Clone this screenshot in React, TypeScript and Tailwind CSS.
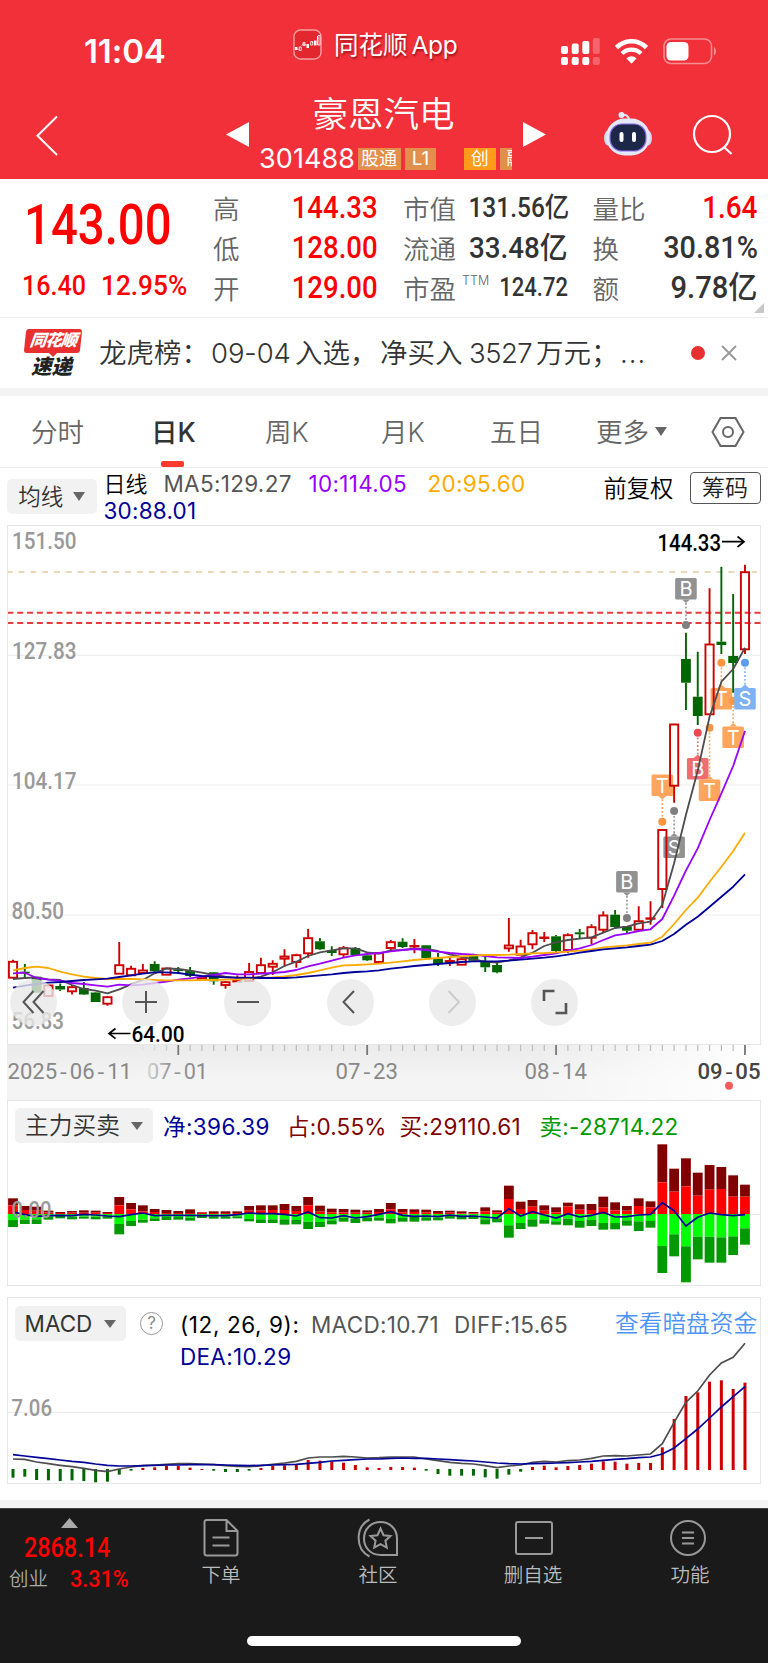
import type { ReactNode } from "react";

const RED = "#cc0000";
const GREEN = "#006600";

// x centre of the n-th trading day
const dayX = (i: number) => 13 + i * 11.806;

const toPoints = (values: number[], y: (v: number) => number = (v) => v) =>
  values.map((v, i) => `${dayX(i).toFixed(1)},${y(v).toFixed(1)}`).join(" ");

// [high, body top, body bottom, low, rising]
const candles: [number, number, number, number, 0 | 1][] = [
  [959.7, 961.3, 977.7, 978.3, 1], [964, 971.7, 973.3, 977.3, 0], [976.7, 976.7, 992.7, 992.7, 0],
  [984.7, 985, 996, 996, 1], [983.5, 986, 989.5, 991, 0], [985, 986.7, 991.3, 994.5, 1],
  [982, 988, 994.5, 995, 0], [992, 992.5, 1002, 1002, 0], [996, 996.7, 1003.7, 1005.7, 1],
  [942, 964.7, 973.7, 974, 1], [965.7, 968.3, 975.3, 976, 1], [964, 970, 973, 974, 1],
  [961.3, 964, 971.3, 972, 0], [967.7, 968, 974.7, 975, 1], [967, 969.5, 971, 973.5, 0],
  [967, 970.7, 976, 977, 0], [977, 977.5, 979, 979, 1], [972, 972.3, 981.3, 984.7, 0],
  [981, 981.7, 985, 988.7, 1], [975.5, 979.5, 981.5, 982, 1], [963, 971.5, 981, 981.5, 1],
  [957.7, 964.7, 973, 974, 1], [960.3, 963.3, 966.7, 975, 1], [949.3, 956, 958.7, 966.7, 1],
  [953.7, 954.7, 962, 967.7, 1], [929, 937.7, 953.3, 957.7, 1], [938, 941.3, 949.3, 950, 0],
  [946.3, 950, 953, 956, 0], [946, 947.7, 954.3, 957, 1], [947, 948, 955, 956, 0],
  [954, 955.3, 960.3, 961, 0], [952, 952.7, 962, 962, 1], [940, 941.7, 948, 950, 1],
  [938.3, 941.7, 947, 948, 0], [939, 945.5, 946.5, 953.3, 1], [945, 945.3, 958, 958.5, 0],
  [953, 958.3, 964, 966, 0], [957, 960.5, 962, 966, 1], [957.5, 958.7, 964.7, 965, 1],
  [953.7, 954.3, 960.7, 961, 0], [956.7, 961.7, 967.3, 972, 0], [962.7, 965, 972.3, 973.3, 0],
  [918, 945, 948.3, 951.7, 1], [939.7, 946, 954.7, 955, 1], [930, 932.7, 944.3, 949.3, 1],
  [932, 937, 937.8, 942, 1], [935, 936.3, 951, 952, 0], [933.3, 934.7, 950, 953.3, 1],
  [929, 932.3, 934.3, 938.3, 0], [924.3, 926.7, 937.7, 944, 1], [911.3, 915, 929.7, 932, 1],
  [910, 914.7, 927, 928, 0], [926, 926.3, 930.7, 933.7, 0], [906.3, 920.7, 929.7, 930, 1],
  [901.3, 917.8, 918.6, 924.7, 1], [829, 829.5, 889, 908, 1], [723.7, 724, 785.7, 802.7, 1],
  [632.7, 659, 682.7, 710, 0], [651.7, 696.7, 716, 725, 0], [588.3, 644, 714.3, 715, 1],
  [566.7, 641.7, 645, 654, 0], [594, 656, 663, 692.7, 0], [564.7, 571.7, 649.3, 654, 1],
];

const ma5 = [
  979, 978, 977.3, 979.3, 980, 985, 989, 990.7, 993.3, 989.3, 984.3, 980, 973.3, 968.3, 969, 970.7,
  972.7, 975, 976.7, 978, 978.3, 976.7, 972.3, 966, 961.7, 956, 952.3, 950.3, 948.3, 948.3, 952.3, 953.7,
  950.3, 950, 948.7, 949, 951, 954.3, 957, 959.3, 961.7, 962.7, 960.3, 957.3, 952.7, 946, 942.3, 940,
  938.7, 937.3, 932.7, 928, 926.7, 923.3, 921.7, 904.7, 863.3, 815, 770.7, 716.7, 681.7, 669, 647.7,
];
const ma10 = [
  973.3, 972.7, 978, 979.7, 980.7, 983, 984, 985.3, 986.7, 984.7, 985.3, 984.7, 983, 981.7, 979.7, 978.3,
  976.7, 975, 973, 974.3, 974.3, 973.7, 973, 972, 970, 966.3, 963.7, 960.7, 957.7, 955.3, 954, 953,
  951.3, 950, 949, 950, 951.7, 953, 954, 954.7, 956, 957.3, 957.7, 958, 956.7, 955, 953.3, 950.7,
  948.3, 945, 940, 935.3, 933.7, 931, 929.3, 919, 895.7, 870.7, 848.3, 820, 793.3, 766, 731,
];
const ma20 = [
  970.3, 968, 966.7, 968, 971.7, 974.3, 976.7, 978, 979, 979, 979, 979.3, 980, 980.3, 980.3, 980.3,
  980, 980, 979.7, 979.3, 978.7, 978, 977.3, 976.3, 975, 973, 970.3, 967.7, 965.3, 965, 964.3, 963.7,
  962.7, 961.3, 960, 959, 958, 957, 956.3, 955.7, 955, 955, 954.7, 954, 953.3, 953, 952.3, 951.7,
  950.7, 949.3, 947.3, 946.3, 945.3, 944, 942.7, 936.7, 924, 910, 897.7, 881.7, 866.7, 851, 832.7,
];
const ma30 = [
  987.7, 985.7, 984, 982.7, 982, 981, 980, 979.3, 978.7, 977, 975.3, 973.7, 972.3, 972.3, 973, 974.7,
  976, 976.7, 977.3, 977.7, 977.7, 978, 978, 978, 977.3, 976.3, 975.3, 974.3, 973, 972, 971.3, 970.3,
  968.7, 967.3, 966, 965, 964, 963, 962, 961.3, 961.3, 961.3, 960.7, 959.7, 958.7, 957.7, 956.3, 954.7,
  952.7, 951, 949.3, 948.3, 947.3, 946, 944.7, 941, 934, 924.7, 916.7, 906.7, 896.7, 886.7, 874.3,
];

// [day, letter, box top, dot y, box colour, dot colour]
const markers: [number, string, number, number, string, string][] = [
  [57, "B", 578, 625, "#929292", "#808080"],
  [55, "T", 774.5, 821.7, "#ffa55c", "#ff963f"],
  [56, "S", 836.5, 811, "#929292", "#808080"],
  [52, "B", 871, 918, "#929292", "#808080"],
  [58, "B", 758, 732.7, "#f16c70", "#ea4a50"],
  [59, "T", 779.5, 727.7, "#ffa55c", "#ff963f"],
  [60, "T", 688, 662.7, "#ffa55c", "#ff963f"],
  [61, "T", 726.5, 701, "#ffa55c", "#ff963f"],
  [62, "S", 688, 662.7, "#7fb2f2", "#5a9df0"],
];

// [large buy, buy, sell, large sell] edges of each bar, zero at 372
const funds = [
  [325, 346, 390, 411], [348, 360, 389, 402], [350, 362, 388, 402], [362, 367, 380, 389], [366, 369, 378, 385],
  [363, 368, 380, 388], [361, 368, 380, 386], [362, 368, 380, 388], [366, 369, 379, 386], [321, 346, 402, 433],
  [339, 358, 393, 408], [346, 364, 389, 398], [357, 366, 385, 393], [360, 369, 381, 390], [363, 369, 381, 389],
  [358, 369, 383, 392], [366, 368, 378, 384], [364, 369, 379, 386], [364, 369, 379, 386], [364, 369, 379, 385],
  [348, 362, 387, 394], [346, 362, 388, 399], [346, 360, 388, 399], [342, 360, 388, 404], [348, 363, 390, 403],
  [321, 346, 395, 417], [347, 365, 396, 411], [356, 367, 391, 403], [357, 367, 383, 395], [359, 368, 386, 399],
  [361, 368, 383, 394], [357, 366, 383, 392], [339, 358, 386, 400], [357, 367, 384, 395], [358, 366, 381, 395],
  [359, 367, 382, 392], [363, 369, 383, 391], [362, 368, 378, 386], [364, 370, 378, 388], [366, 370, 379, 387],
  [352, 364, 388, 403], [361, 367, 385, 397], [287, 327, 406, 443], [335, 357, 399, 417], [330, 350, 388, 410],
  [346, 362, 390, 401], [352, 367, 394, 404], [338, 349, 386, 406], [343, 359, 393, 413], [342, 360, 390, 408],
  [320, 352, 399, 419], [337, 361, 399, 418], [348, 362, 391, 407], [325, 348, 394, 423], [334, 352, 393, 413],
  [163, 277, 468, 549], [236, 305, 433, 499], [205, 289, 469, 577], [248, 317, 440, 508], [225, 299, 440, 518],
  [231, 297, 442, 518], [256, 320, 439, 495], [284, 320, 415, 464],
];
const fundNet = [
  366, 374, 379, 377, 376, 377, 373, 375, 378, 380, 374, 369, 377, 376, 376, 376, 377, 377, 377, 374, 369,
  371, 371, 373, 378, 366, 383, 384, 377, 384, 380, 373, 365, 376, 379, 378, 380, 375, 379, 378, 381, 384,
  356, 378, 365, 375, 384, 371, 381, 376, 367, 381, 380, 375, 373, 338, 362, 408, 382, 369, 374, 377, 374,
];
const fundY = (v: number) => 1090 + v / 3;

const macdBars = [
  563, 560, 570, 571, 573, 571, 573, 577, 575, 554, 542, 534, 532, 528, 528, 533, 537, 542, 546, 546, 542,
  534, 528, 526, 522, 510, 512, 514, 518, 525, 532, 534, 531, 531, 533, 542, 552, 557, 557, 557, 562, 566,
  554, 545, 531, 527, 532, 528, 525, 521, 514, 515, 521, 519, 519, 472, 387, 318, 307, 275, 271, 297, 278,
];
const diff = [
  507, 508, 516, 521, 526, 530, 535, 541, 545, 537, 531, 527, 525, 523, 521, 521, 522, 524, 527, 529, 530,
  527, 523, 519, 514, 504, 501, 501, 499, 501, 504, 503, 501, 501, 501, 507, 512, 517, 520, 522, 527, 533,
  528, 525, 517, 514, 516, 512, 510, 505, 498, 497, 498, 495, 492, 461, 397, 337, 303, 255, 219, 202, 160,
];
const dea = [
  494, 498, 502, 506, 510, 514, 517, 522, 526, 528, 528, 527, 526, 525, 525, 524, 524, 524, 525, 526, 527,
  526, 525, 524, 523, 520, 517, 513, 511, 509, 507, 507, 505, 504, 505, 505, 507, 509, 511, 513, 516, 519,
  521, 522, 521, 520, 519, 518, 516, 514, 511, 508, 506, 503, 501, 492, 474, 446, 417, 384, 351, 320, 290,
];
const macdY = (v: number) => 1290 + v / 3;

function Label({ x, y, w, fill = "#999", weight = 500, size = 23.4, children }: {
  x: number; y: number; w: number; fill?: string; weight?: number; size?: number; children: ReactNode;
}) {
  return (
    <text x={x} y={y} textLength={w} lengthAdjust="spacingAndGlyphs" fill={fill} fontWeight={weight}
      fontSize={size} fontFamily="Roboto, sans-serif">
      {children}
    </text>
  );
}

function DateLabel({ x, w, fill = "#888", weight = 400, date }: {
  x: number; w: number; fill?: string; weight?: number; date: string;
}) {
  const parts = date.split("-");
  return (
    <Label x={x} y={1079} w={w} size={22} fill={fill} weight={weight}>
      {parts.map((part, i) => (
        <tspan key={i}>
          {i > 0 && <tspan fontFamily="Liberation Mono, monospace" fontSize="21">-</tspan>}
          {part}
        </tspan>
      ))}
    </Label>
  );
}

function Marker({ day, letter, top, dot, fill, dotFill }: {
  day: number; letter: string; top: number; dot: number; fill: string; dotFill: string;
}) {
  const x = dayX(day);
  const down = dot > top;
  const edge = down ? top + 21.5 : top;
  const tip = down ? edge + 3.5 : edge - 3.5;
  return (
    <g>
      <line x1={x} x2={x} y1={tip} y2={dot} stroke={fill} strokeWidth="1.6" strokeDasharray="1.8 2" />
      <path d={`M${x - 4} ${edge}L${x} ${tip}L${x + 4} ${edge}Z`} fill={fill} />
      <rect x={x - 10.8} y={top} width="21.6" height="21.5" rx="1.5" fill={fill} />
      <circle cx={x} cy={dot} r="4" fill={dotFill} />
      <text x={x} y={top + 18} textAnchor="middle" fontSize="20" fill="#fff" fontFamily="Inter, sans-serif">
        {letter}
      </text>
    </g>
  );
}

function StatusBar() {
  return (
    <div className="flex h-[84px] items-start text-white">
      <span className="mt-[34px] ml-[84px] w-[209px] text-[33px] leading-[34px] font-semibold tracking-[-0.1px]">11:04</span>
      <svg width="29" height="31" viewBox="0 0 29 31" className="mt-[29px]" fill="none">
        <rect x="1" y="1" width="27" height="29" rx="6.5" fill="#e2282e" stroke="#f8a0a3" strokeWidth="1.4" />
        <path d="M2 20h2.5M5.5 20.5h1M9 16.5l2-2 2 2M14.5 17h1M19 13.500h1M24.500 7v9" stroke="#fff" strokeWidth="1" />
        <path d="M2 18h2.500v3H2zM13.500 15h2.500v4h-2.500zM21 11.500h2.500v5H21z" fill="#fff" />
        <path d="M6.200 18h2v3.500h-2zM10 13.500h2v3h-2zM17.700 12.500h2v3.500h-2zM25 6.500h2v9.500h-2z" stroke="#fff" strokeWidth=".8" />
      </svg>
      <span className="mt-[29px] ml-[12px] w-[227px] text-[24.500px] leading-[32px] [text-shadow:1px_2px_2px_rgba(90,0,0,.55)]">
        同花顺<span className="ml-1 tracking-[-0.3px]">App</span>
      </span>
      <svg width="39" height="28" viewBox="0 0 39 28" className="mt-[37px]" fill="#fff">
        <rect x="0" y="9" width="7" height="8" rx="2" />
        <rect x="10.700" y="6.500" width="7" height="10.500" rx="2" />
        <rect x="21.300" y="4" width="7" height="13" rx="2" />
        <rect x="31.800" y="1" width="7" height="16" rx="2" opacity=".25" />
        <rect x="0" y="20" width="7" height="8" rx="2" />
        <rect x="10.700" y="20" width="7" height="8" rx="2" />
        <rect x="21.300" y="20" width="7" height="8" rx="2" />
        <rect x="31.800" y="20" width="7" height="8" rx="2" opacity=".25" />
      </svg>
      <svg width="33" height="25" viewBox="0 0 33 25" className="mt-[38.500px] ml-[15px]" fill="none" stroke="#fff">
        <path d="M1.500 8.500C10 .2 23 .2 31.500 8.500" strokeWidth="4.600" />
        <path d="M7 14.500C12.500 9.300 20.500 9.300 26 14.500" strokeWidth="4.300" />
        <path d="M11.500 19.500C14.500 16.500 18.500 16.500 21.500 19.500L16.500 24.700Z" fill="#fff" stroke="none" />
      </svg>
      <svg width="54" height="27" viewBox="0 0 54 27" className="mt-[37.500px] ml-[14.500px]" fill="none">
        <rect x="1" y="1" width="47.500" height="24.500" rx="7" stroke="#fff" strokeOpacity=".45" strokeWidth="1.600" />
        <rect x="3.500" y="4" width="22" height="18.500" rx="4.500" fill="#fff" />
        <path d="M51 9c2.600 1.500 2.600 7 0 8.500z" fill="#fff" fillOpacity=".45" />
      </svg>
    </div>
  );
}

function TitleBar() {
  return (
    <div className="flex h-[95px] items-start text-white">
      <svg width="24" height="42" viewBox="0 0 24 42" className="mt-[31px] ml-[35px]" fill="none" stroke="#fff" strokeWidth="2">
        <path d="M22 1.500L2.500 20.700L22 40" />
      </svg>
      <svg width="23" height="25" viewBox="0 0 23 25" className="mt-[38px] ml-[167px]" fill="#fff">
        <path d="M0 12.500L23 0V25Z" />
      </svg>
      <div className="ml-[10px] flex w-[254px] flex-col items-start">
        <h1 className="mt-[10px] w-[249px] text-center text-[35.500px] leading-[42px] font-[350]">豪恩汽电</h1>
        <div className="mt-[11px] flex h-[24px] w-full items-center text-[19px] leading-[22px]">
          <span className="w-[99px] text-[27px] leading-[24px] tracking-[0.1px]">301488</span>
          <span className="h-[22px] w-[43px] bg-[#e18f4b] pl-[3px] text-[18px]">股通</span>
          <span className="ml-[4px] h-[22px] w-[31px] bg-[#e18f4b] text-center">L1</span>
          <span className="ml-[28px] h-[22px] w-[31.500px] bg-[#ff9b1a] text-center text-[18px]">创</span>
          <span className="ml-[4px] h-[22px] w-[12px] overflow-hidden bg-[#e18f4b] pl-[7px] text-[18px]">融</span>
        </div>
      </div>
      <svg width="23" height="25" viewBox="0 0 23 25" className="mt-[38px] ml-[10px]" fill="#fff">
        <path d="M23 12.500L0 0V25Z" />
      </svg>
      <svg width="48" height="46" viewBox="0 0 48 46" className="mt-[27px] ml-[58px]" fill="none">
        <path d="M25 9C24.500 4.500 21 3 17.500 4" stroke="#dfe3f5" strokeWidth="2" />
        <circle cx="17.500" cy="4" r="3" fill="#e8ebf8" />
        <ellipse cx="4" cy="27" rx="4" ry="7.500" fill="#cfd4ef" />
        <ellipse cx="44" cy="27" rx="4" ry="7.500" fill="#cfd4ef" />
        <rect x="2" y="7.500" width="44" height="37" rx="18.500" fill="#e4e8f7" />
        <rect x="6" y="13" width="36" height="27" rx="12" fill="#1d2747" stroke="#8a6be8" strokeWidth="1.200" />
        <rect x="15.500" y="21" width="4" height="10" rx="2" fill="#fff" />
        <rect x="28" y="21" width="4" height="10" rx="2" fill="#fff" />
      </svg>
      <svg width="42" height="42" viewBox="0 0 42 42" className="mt-[30px] ml-[40px]" fill="none" stroke="#fff" strokeWidth="2.200">
        <circle cx="20" cy="20" r="18" />
        <path d="M32 33L39.500 40" />
      </svg>
    </div>
  );
}

function Stat({ label, children, className }: { label: ReactNode; children: ReactNode; className?: string }) {
  return (
    <div className="flex h-[40px] items-center justify-between">
      <span className="mt-[2px] flex text-[26.500px] leading-[40px] font-[350] whitespace-nowrap text-[#666]">{label}</span>
      <span className={"origin-right font-['Roboto','Noto_Sans_CJK_SC',sans-serif] font-medium leading-[40px] whitespace-nowrap " + className}>
        {children}
      </span>
    </div>
  );
}

function Quote() {
  return (
    <section className="relative flex h-[139px] border-b-[1.500px] border-[#eee] bg-white">
      <div className="w-[213px] font-['Roboto',sans-serif] text-[#ff0000]">
        <div className="mt-[19px] ml-[24px] origin-left scale-x-[0.86] text-[55px] leading-[55px] font-medium">143.00</div>
        <div className="mt-[18px] ml-[21.500px] flex text-[28.500px] leading-[30px] font-medium">
          <span className="w-[79.500px] origin-left scale-x-[0.88]">16.40</span>
          <span className="origin-left scale-x-[0.92]">12.95%</span>
        </div>
      </div>
      <div className="w-[164.500px] pt-[9px]">
        <Stat label="高" className="scale-x-[0.89] text-[31px] text-[#ff0000]">144.33</Stat>
        <Stat label="低" className="scale-x-[0.89] text-[31px] text-[#ff0000]">128.00</Stat>
        <Stat label="开" className="scale-x-[0.89] text-[31px] text-[#ff0000]">129.00</Stat>
      </div>
      <div className="ml-[25.500px] w-[164.500px] pt-[9px]">
        <Stat label="市值" className="scale-x-[0.89] text-[27.500px] text-[#333]">131.56亿</Stat>
        <Stat label="流通" className="scale-x-[0.925] text-[30px] text-[#333]">33.48亿</Stat>
        <Stat
          label={<>市盈<sup className="top-0 ml-[6px] pt-[3px] self-start text-[12.500px] leading-[18px]">TTM</sup></>}
          className="scale-x-[0.88] text-[25px] text-[#333]"
        >
          124.72
        </Stat>
      </div>
      <div className="ml-[25px] w-[165px] pt-[9px]">
        <Stat label="量比" className="scale-x-[0.9] text-[31px] text-[#ff0000]">1.64</Stat>
        <Stat label="换" className="scale-x-[0.93] text-[31px] text-[#333]">30.81%</Stat>
        <Stat label="额" className="scale-x-[0.94] text-[31px] text-[#333]">9.78亿</Stat>
      </div>
      <svg width="10" height="10" viewBox="0 0 10 10" className="absolute right-[4px] bottom-[4px]" fill="#c8c8c8">
        <path d="M10 0V10H0Z" />
      </svg>
    </section>
  );
}

function News() {
  return (
    <section className="flex h-[70px] items-center bg-white">
      <div className="ml-[24px] flex w-[58px] flex-col items-center font-black italic">
        <div className="h-[24px] w-[56px] -skew-x-6 rounded-[3px] bg-[#e93030] text-center text-[16.500px] leading-[23px] tracking-[-1px] text-white">
          同花顺
        </div>
        <svg width="8" height="4" viewBox="0 0 8 4" fill="#e93030"><path d="M0 0H8L4 4Z" /></svg>
        <div className="mr-[3px] h-[20px] text-[20.500px] leading-[20px] text-[#222]">速递</div>
      </div>
      <p className="ml-[17px] w-[589px] text-[27.500px] leading-[40px] font-[350] whitespace-nowrap text-[#333]">
        <span className="inline-block w-[112px]">龙虎榜：</span>
        <span className="inline-block w-[84px] tracking-[-0.1px]">09-04</span>
        <span className="inline-block w-[85px]">入选，</span>
        <span className="inline-block w-[89px]">净买入</span>
        <span className="inline-block w-[67px] tracking-[-0.5px]">3527</span>
        <span className="inline-block w-[84px]">万元；</span>
        <span className="tracking-[1px]">...</span>
      </p>
      <span className="ml-[3px] h-[14px] w-[14px] rounded-full bg-[#e93030]" />
      <svg width="16" height="16" viewBox="0 0 16 16" className="ml-[15.500px]" stroke="#999" strokeWidth="1.900">
        <path d="M1 1L15 15M15 1L1 15" />
      </svg>
    </section>
  );
}

function Caret({ className = "ml-[10px] h-[9px] w-[12px]" }: { className?: string }) {
  return (
    <svg viewBox="0 0 12 9" preserveAspectRatio="none" className={className} fill="#666">
      <path d="M0 0H12L6 9Z" />
    </svg>
  );
}

function Tabs() {
  return (
    <nav className="flex h-[72px] items-start border-b border-[#eee] bg-white text-[26.500px] leading-[72px] font-[350] whitespace-nowrap text-[#666]">
      <span className="ml-[31px] w-[120px]">分时</span>
      <span className="flex w-[114px] flex-col">
        <b className="h-[65px] font-medium text-[#333]">日K</b>
        <i className="ml-[10px] h-[6px] w-[23px] rounded-[2px] bg-[#ff3b30]" />
      </span>
      <span className="w-[116px]">周K</span>
      <span className="w-[109px]">月K</span>
      <span className="w-[106px]">五日</span>
      <span className="flex w-[115px] items-center">更多<Caret className="mb-[1px] ml-[6px] h-[9px] w-[12px]" /></span>
      <svg width="34" height="32" viewBox="0 0 34 32" className="mt-[20px]" fill="none" stroke="#666" strokeWidth="2">
        <path d="M9.500 2H24.500L32.500 16L24.500 30H9.500L1.500 16Z" />
        <circle cx="17" cy="16" r="5" />
      </svg>
    </nav>
  );
}

function MaHeader() {
  return (
    <div className="flex h-[57px] bg-white text-[22.500px] leading-[26px] whitespace-nowrap">
      <button className="mt-[11px] ml-[7px] flex h-[35px] w-[89.500px] items-center justify-center rounded-[5px] bg-[#f2f2f2] font-[350] text-[#333]">
        均线<Caret />
      </button>
      <div className="mt-[2px] ml-[7px] w-[500px]">
        <div className="flex h-[27px] items-center">
          <span className="w-[60px] text-[22px] font-[350] text-black">日线</span>
          <span className="w-[145px] tracking-[0.3px] text-[#555]">MA5:129.27</span>
          <span className="w-[119px] tracking-[0.3px] text-[#9900ff]">10:114.05</span>
          <span className="tracking-[0.3px] text-[#ffaa00]">20:95.60</span>
        </div>
        <div className="pt-px tracking-[0.2px] text-[#000099]">30:88.01</div>
      </div>
      <span className="mt-[8px] w-[86px] text-[23.300px] font-[350] text-black">前复权</span>
      <button className="mt-[4px] flex h-[32px] w-[71px] items-center justify-center rounded-[4px] border-[1.500px] border-[#555] text-[23px] font-[350] text-[#222]">
        筹码
      </button>
    </div>
  );
}

function ControlButton({ children, className = "ml-[55.300px]" }: { children: ReactNode; className?: string }) {
  return (
    <button className={"flex h-[47px] w-[47px] items-center justify-center rounded-full bg-[#e8e8e8]/80 " + className}>
      <svg width="26" height="26" viewBox="0 0 26 26" fill="none" stroke="#555" strokeWidth="2">{children}</svg>
    </button>
  );
}

function KLineChart() {
  return (
    <div className="relative mx-[7px] h-[520px] bg-white">
      <svg width="754" height="520" viewBox="7 525 754 520" className="block">
        <rect x="7.500" y="525.500" width="753" height="519" fill="#fff" stroke="#e6e6e6" />
        {[655.3, 785, 915].map((y) => (
          <line key={y} x1="8" x2="760" y1={y} y2={y} stroke="#eee" strokeWidth="1.200" />
        ))}
        <line x1="8" x2="757" y1="572" y2="572" stroke="#e3cba2" strokeWidth="1.400" strokeDasharray="6 5.830" strokeDashoffset="1.300" />
        <line x1="8" x2="761" y1="612.700" y2="612.700" stroke="#e83b3b" strokeWidth="1.900" strokeDasharray="6 3.830" strokeDashoffset=".6" />
        <line x1="8" x2="761" y1="623" y2="623" stroke="#e83b3b" strokeWidth="1.900" strokeDasharray="6 3.830" strokeDashoffset=".6" />

        <Label x={12} y={548.5} w={64.5}>151.50</Label>
        <Label x={12} y={659} w={64.5}>127.83</Label>
        <Label x={12} y={789} w={64.5}>104.17</Label>
        <Label x={11.5} y={918.7} w={52.5}>80.50</Label>
        <Label x={11.5} y={1028.500} w={52.5}>56.83</Label>

        {markers.map(([day, letter, top, dot, fill, dotFill]) => (
          <Marker key={day} day={day} letter={letter} top={top} dot={dot} fill={fill} dotFill={dotFill} />
        ))}

        {candles.map(([high, top, bottom, low, up], i) => {
          const x = dayX(i);
          const color = up ? RED : GREEN;
          return (
            <g key={i} stroke={color} strokeWidth="1.900">
              <path d={`M${x} ${high}V${top}M${x} ${bottom}V${low}`} />
              {up ? (
                <rect x={x - 4.100} y={top + 0.5} width="8.200" height={Math.max(bottom - top - 0.5, 0.5)} fill="none" />
              ) : (
                <rect x={x - 4.900} y={top} width="9.800" height={bottom - top} fill={color} stroke="none" />
              )}
            </g>
          );
        })}

        <g fill="none" strokeWidth="1.800" strokeLinejoin="round">
          <polyline points={toPoints(ma5)} stroke="#4d4d4d" />
          <polyline points={toPoints(ma10)} stroke="#9900ff" />
          <polyline points={toPoints(ma20)} stroke="#ffaa00" />
          <polyline points={toPoints(ma30)} stroke="#000099" />
        </g>

        <Label x={657.5} y={550.5} w={63.5} fill="#000">144.33</Label>
        <path d="M722 541.700H744M737.500 536.500L744 541.700L737.500 547" fill="none" stroke="#000" strokeWidth="1.700" />
        <Label x={131.500} y={1041.500} w={53} fill="#000" size={22.5}>64.00</Label>
        <path d="M130.500 1033.500H109M115.500 1028.500L109 1033.500L115.500 1038.700" fill="none" stroke="#000" strokeWidth="1.700" />
      </svg>

      {/* Chart controls */}
      <div className="absolute top-[453.500px] left-[3px] flex">
        <ControlButton className="ml-0">
          <path d="M12.500 2L2.500 13L12.500 24M22.500 2L12.500 13L22.500 24" />
        </ControlButton>
        <ControlButton className="ml-[65px]">
          <path d="M13 2V24M2 13H24" />
        </ControlButton>
        <ControlButton>
          <path d="M2 13H24" />
        </ControlButton>
        <ControlButton>
          <path d="M17 2L6.500 13L17 24" />
        </ControlButton>
        <ControlButton>
          <path d="M9.500 2L20 13L9.500 24" stroke="#ccc" />
        </ControlButton>
        <ControlButton>
          <path d="M2 12V2H12.500M24 14V24H13.500" strokeWidth="2.600" />
        </ControlButton>
      </div>
    </div>
  );
}

function TimeAxis() {
  return (
    <div className="mx-[7px] h-[55px] bg-[#f4f4f4]">
      <svg width="754" height="55" viewBox="7 1045 754 55" className="block">
        <defs>
          <linearGradient id="axisShade" x1="0" x2="0" y1="0" y2="1">
            <stop offset="0" stopColor="#ebebeb" />
            <stop offset=".6" stopColor="#f4f4f4" />
          </linearGradient>
          <linearGradient id="axisFade">
            <stop offset=".7" stopColor="#fff" stopOpacity="0" />
            <stop offset="1" stopColor="#fff" />
          </linearGradient>
          <linearGradient id="dateFade">
            <stop offset="0" stopColor="#d5d5d5" />
            <stop offset=".35" stopColor="#999" />
            <stop offset="1" stopColor="#888" />
          </linearGradient>
        </defs>
        <rect x="7" y="1045" width="754" height="55" fill="url(#axisShade)" />
        <rect x="7" y="1045" width="754" height="55" fill="url(#axisFade)" />
        {candles.map((_, i) => {
          if (i < 11) return null;
          const major = i % 16 === 14;
          return (
            <line key={i} x1={dayX(i)} x2={dayX(i)} y1="1045" y2={major ? 1055 : 1051}
              stroke={major ? "#777" : "#bbb"} strokeWidth={major ? 1.8 : 1.2} opacity={i < 14 ? (i - 10) / 5 : 1} />
          );
        })}
        <DateLabel x={7.5} w={124.5} date="2025-06-11" />
        <DateLabel x={147} w={61} fill="url(#dateFade)" date="07-01" />
        <DateLabel x={335.5} w={62.5} date="07-23" />
        <DateLabel x={524.5} w={62.5} date="08-14" />
        <DateLabel x={697.5} w={63} fill="#444" weight={500} date="09-05" />
        <circle cx="729" cy="1085.700" r="4" fill="#f75c5c" />
      </svg>
    </div>
  );
}

function FundPanel() {
  return (
    <div className="relative mx-[7px] h-[186px] bg-white">
      <svg width="754" height="186" viewBox="7 1100 754 186" className="absolute inset-0">
        <rect x="7.500" y="1100.500" width="753" height="185" fill="#fff" stroke="#e6e6e6" />
        <line x1="8" x2="760" y1="1214.500" y2="1214.500" stroke="#e6e6e6" />
        {funds.map(([bigBuy, buy, sell, bigSell], i) => {
          const x = dayX(i) - 4.9;
          return (
            <g key={i}>
              <rect x={x} y={fundY(bigBuy)} width="9.800" height={(buy - bigBuy) / 3} fill="#800000" />
              <rect x={x} y={fundY(buy)} width="9.800" height={(372 - buy) / 3} fill="#ff0000" />
              <rect x={x} y={1214} width="9.800" height={(sell - 372) / 3} fill="#00ff00" />
              <rect x={x} y={fundY(sell)} width="9.800" height={(bigSell - sell) / 3} fill="#009900" />
            </g>
          );
        })}
        <polyline points={toPoints(fundNet, fundY)} fill="none" stroke="#000099" strokeWidth="1.700" />
        <Label x={11.500} y={1217.500} w={40}>0.00</Label>
      </svg>
      <div className="relative flex items-center pt-[8px] pl-[8px] text-[22.500px] whitespace-nowrap">
        <button className="flex h-[35px] w-[138px] items-center justify-center rounded-[5px] bg-[#f1f1f1] text-[23.700px] font-[350] text-[#333]">
          主力买卖<Caret className="ml-[11px] h-[8px] w-[12px]" />
        </button>
        <div className="flex pt-[2px]">
          <span className="ml-[10px] w-[124px] tracking-[0.4px] text-[#000099]">净:396.39</span>
          <span className="w-[112.500px] tracking-[0.2px] text-[#800000]">占:0.55%</span>
          <span className="w-[140px] tracking-[0.4px] text-[#800000]">买:29110.61</span>
          <span className="tracking-[0.3px] text-[#009900]">卖:-28714.22</span>
        </div>
      </div>
    </div>
  );
}

function MacdPanel() {
  return (
    <div className="relative mx-[7px] mt-[11px] h-[187px] bg-white">
      <svg width="754" height="187" viewBox="7 1297 754 187" className="absolute inset-0">
        <rect x="7.500" y="1297.500" width="753" height="186" fill="#fff" stroke="#e6e6e6" />
        <line x1="8" x2="760" y1="1412.300" y2="1412.300" stroke="#eee" strokeWidth="1.200" />
        <Label x={11.500} y={1415.500} w={40.500}>7.06</Label>
        {macdBars.map((v, i) =>
          v > 540 ? (
            <rect key={i} x={dayX(i) - 1.5} y={macdY(537)} width="3" height={(v - 537) / 3} fill={GREEN} />
          ) : (
            <rect key={i} x={dayX(i) - 1.5} y={macdY(v)} width="3" height={(540 - v) / 3} fill={RED} />
          ),
        )}
        <polyline points={toPoints(diff, macdY)} fill="none" stroke="#4d4d4d" strokeWidth="1.700" />
        <polyline points={toPoints(dea, macdY)} fill="none" stroke="#000099" strokeWidth="1.700" />
      </svg>
      <div className="relative flex pt-[9px] pl-[8px] text-[22.500px] leading-[32px] whitespace-nowrap">
        <button className="flex h-[35px] w-[111px] items-center justify-center rounded-[5px] bg-[#f1f1f1] text-[#333]">
          MACD<Caret className="ml-[12px] h-[8px] w-[12px]" />
        </button>
        <span className="mt-[6px] ml-[14px] flex h-[23px] w-[23px] items-center justify-center rounded-full border-[1.500px] border-[#999] text-[17px] leading-none text-[#888]">
          ?
        </span>
        <div className="mt-[3px] ml-[17px] w-[435px] text-[#555]">
          <div className="flex">
            <span className="w-[131px] tracking-[0.6px] text-black">(12, 26, 9):</span>
            <span className="w-[143px] tracking-[0.3px]">MACD:10.71</span>
            <span className="tracking-[0.3px]">DIFF:15.65</span>
          </div>
          <div className="tracking-[0.3px] text-[#000099]">DEA:10.29</div>
        </div>
        <a className="mt-[2px] text-[23.700px] font-[350] text-[#4c94f5]">查看暗盘资金</a>
      </div>
    </div>
  );
}

function BottomItem({ label, icon, className }: { label: string; icon: ReactNode; className: string }) {
  return (
    <div className={"flex flex-col items-center " + className}>
      <svg width="42" height="40" viewBox="0 0 42 40" className="mt-[9px]" fill="none" stroke="#999" strokeWidth="2">{icon}</svg>
      <span className="mt-[3px] text-[19.500px] leading-[28px] font-[350] text-[#bbb]">{label}</span>
    </div>
  );
}

function BottomBar() {
  return (
    <footer className="h-[155px] border-t border-[#444] bg-[#1a1a1a]">
      <div className="flex h-[127px] items-start">
        <div className="flex w-[140px] flex-col">
          <svg width="17" height="10" viewBox="0 0 17 10" className="mt-[9px] ml-[60.500px]" fill="#aaa"><path d="M8.500 0L17 10H0Z" /></svg>
          <span className="mt-[5px] ml-[24px] origin-left scale-x-[0.85] font-['Roboto',sans-serif] text-[27.500px] leading-[30px] font-medium text-[#ff0000]">2868.14</span>
          <span className="flex items-center text-[19.500px] leading-[32px] font-[350] text-[#aaa]">
            <span className="ml-[9px] w-[61px]">创业</span>
            <span className="origin-left scale-x-[0.9] font-['Roboto',sans-serif] text-[24px] font-medium text-[#ff0000]">3.31%</span>
          </span>
        </div>
        <BottomItem label="下单" className="ml-[41px] w-[80px]" icon={
          <path d="M26.500 2H7Q4.500 2 4.500 4V35.500Q4.500 37.500 7 37.500H35Q37.500 37.500 37.500 35.500V13ZM26.500 2V13H37.500M12.500 19.500H29.500M12.500 27.500H29.500" />
        } />
        <BottomItem label="社区" className="ml-[77px] w-[80px]" icon={
          <>
            <path d="M40 37H24C13.500 37 7 29.500 7 20.500C7 11 14 4 23.500 4C33 4 40 11 40 20.500Z" />
            <path d="M12.500 38.500C-2 31 -2 9 12.500 1.500" />
            <path d="M23.500 10.500L26.500 17.200L33.500 18L28.400 22.700L29.800 29.700L23.500 26.200L17.200 29.700L18.600 22.700L13.500 18L20.500 17.200Z" />
          </>
        } />
        <BottomItem label="删自选" className="ml-[75px] w-[80px]" icon={
          <>
            <rect x="4" y="4" width="36" height="32" rx="2" />
            <path d="M13 20H31" />
          </>
        } />
        <BottomItem label="功能" className="ml-[77px] w-[80px]" icon={
          <>
            <circle cx="19" cy="20" r="17" />
            <path d="M13 14.500H25M13 20H25M13 25.500H25" />
          </>
        } />
      </div>
      <div className="mx-auto h-[10px] w-[274px] rounded-full bg-white" />
    </footer>
  );
}

export default function App() {
  return (
    <div className="h-[1663px] w-[768px] overflow-hidden bg-white font-['Inter','Noto_Sans_CJK_SC',sans-serif]">
      <header className="h-[179px] bg-[#f23039]">
        <StatusBar />
        <TitleBar />
      </header>
      <Quote />
      <News />
      <div className="h-[8px] bg-[#f4f4f4]" />
      <Tabs />
      <MaHeader />
      <KLineChart />
      <TimeAxis />
      <FundPanel />
      <MacdPanel />
      <div className="mt-[16px] h-[8px] bg-[#f4f4f4]" />
      <BottomBar />
    </div>
  );
}
